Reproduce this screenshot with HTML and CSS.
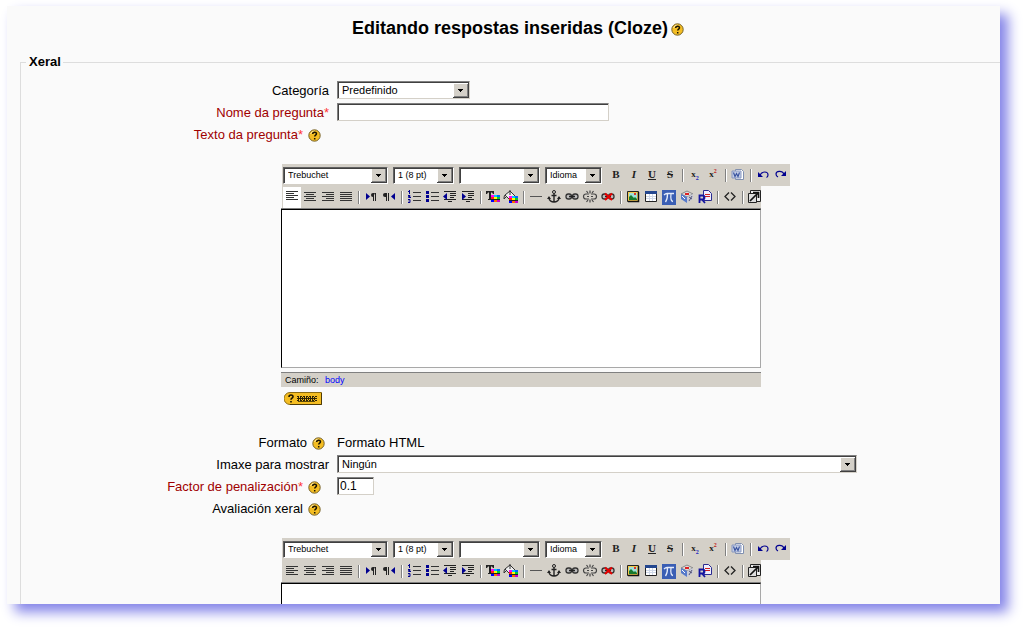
FILE: index.html
```html
<!DOCTYPE html>
<html lang="gl">
<head>
    <meta charset="UTF-8">
    <meta name="viewport" content="width=device-width, initial-scale=1.0">
    <title>Editando respostas inseridas (Cloze)</title>
    <link rel="stylesheet" href="styles.css">
</head>
<body>
    <svg class="symbols" aria-hidden="true">
        <symbol id="i-help" viewBox="0 0 13 13"><circle cx="6.5" cy="6.5" r="5.7" fill="#f4bd22" stroke="#75622c"/><path d="M2.5 5a4.5 4.5 0 0 1 4-3" fill="none" stroke="#ffe9a0"/><path d="M4.700 5c0-2.300 3.800-2.300 3.800-.2 0 1.400-1.800 1.200-1.800 2.800M6.700 9v1.500" fill="none" stroke="#1a1400" stroke-width="1.500"/></symbol>
        <symbol id="i-keys" viewBox="0 0 38 13"><path d="M6 .5h31.500v12H6a6 6 0 0 1 0-12z" fill="#f4bd22" stroke="#8a6a12"/><path d="M6 12.500h31.500V1" fill="none" stroke="#4d3a06"/><path d="M5 5c0-2.600 4-2.600 4-.3 0 1.500-2 1.400-2 3M7 9v1.600" fill="none" stroke="#1a1400" stroke-width="1.600"/><path d="M13 4.500h20M13 8.500h20" stroke="#2b2206" stroke-dasharray="2 1"/><path d="M13 6.500h20" stroke="#2b2206"/><path d="M14 5.500h18M14 7.500h18" stroke="#2b2206" stroke-dasharray="1 1"/><path d="M14 9.500h17" stroke="#5b4706"/></symbol>
        <symbol id="i-left" viewBox="0 0 18 18"><path d="M3 4.500h12M3 8.500h12M3 12.500h12" stroke="#333"/><path d="M3 6.500h8M3 10.500h8" stroke="#333"/></symbol>
        <symbol id="i-center" viewBox="0 0 18 18"><path d="M3 4.500h12M3 8.500h12M3 12.500h12M5 6.500h8M5 10.500h8" stroke="#333"/></symbol>
        <symbol id="i-right" viewBox="0 0 18 18"><path d="M3 4.500h12M3 8.500h12M3 12.500h12M7 6.500h8M7 10.500h8" stroke="#333"/></symbol>
        <symbol id="i-full" viewBox="0 0 18 18"><path d="M3 4.500h12M3 6.500h12M3 8.500h12M3 10.500h12M3 12.500h12" stroke="#333"/></symbol>
        <symbol id="i-ltr" viewBox="0 0 18 18"><path d="M4 5l4 3.500L4 12z" fill="#000090"/><path d="M13 5h-2a2 2 0 0 0 0 4z" fill="#222"/><path d="M11.500 5v8M13.500 5v8" stroke="#222"/></symbol>
        <symbol id="i-rtl" viewBox="0 0 18 18"><path d="M15 5l-4 3.500 4 3.500z" fill="#000090"/><path d="M7 5H5a2 2 0 0 0 0 4h2z" fill="#222"/><path d="M6.500 5v8M8.500 5v8" stroke="#222"/></symbol>
        <symbol id="i-ol" viewBox="0 0 18 18"><path d="M8 4.500h8M8 8.500h8M8 12.500h8" stroke="#333"/><path d="M4.500 2v4M3 3.500h1M3 7.500h2v1H3.500v1H6M3 11.500h2v3H3M3.500 13h1" fill="none" stroke="#000090"/></symbol>
        <symbol id="i-ul" viewBox="0 0 18 18"><path d="M8 4.500h8M8 8.500h8M8 12.500h8" stroke="#333"/><path d="M3 3h3v3H3zM3 7h3v3H3zM3 11h3v3H3z" fill="#000090"/></symbol>
        <symbol id="i-outdent" viewBox="0 0 18 18"><path d="M3 3.500h12M9 5.500h6M9 7.500h6M9 9.500h4M3 11.500h12M7 13.500h4" stroke="#222"/><path d="M6 5v7L2 8.500z" fill="#000090"/></symbol>
        <symbol id="i-indent" viewBox="0 0 18 18"><path d="M3 3.500h12M9 5.500h6M9 7.500h6M9 9.500h4M3 11.500h12M7 13.500h4" stroke="#222"/><path d="M3 5v7l4-3.500z" fill="#000090"/></symbol>
        <symbol id="i-swatch" viewBox="0 0 9 7"><path d="M0 0h9v7H0z" fill="#222"/><path d="M0 0h3v2H0z" fill="#f0f"/><path d="M3 0h3v2H3z" fill="#0cf"/><path d="M6 0h3v2H6z" fill="#06f"/><path d="M0 2h3v2H0z" fill="#f22"/><path d="M3 2h3v2H3z" fill="#ff0"/><path d="M6 2h3v2H6z" fill="#0c3"/><path d="M0 5h3v2H0z" fill="#00f"/><path d="M3 5h3v2H3z" fill="#f60"/><path d="M6 5h3v2H6z" fill="#c0c"/></symbol>
        <symbol id="i-color" viewBox="0 0 18 18"><path d="M2 3h8v3H9L8 4.500H7V11h1v1H4v-1h1V4.500H4L3 6H2z" fill="#222"/><use href="#i-swatch" x="7" y="7" width="9" height="7"/></symbol>
        <symbol id="i-fill" viewBox="0 0 18 18"><path d="M3 7l5-4 5 5-5 4z" fill="#eee" stroke="#333"/><path d="M3 7c-1 1-1 3-1 4l2-2M8 2v5" fill="none" stroke="#333"/><use href="#i-swatch" x="7" y="8" width="9" height="7"/></symbol>
        <symbol id="i-hr" viewBox="0 0 18 18"><path d="M3 8.500h12" stroke="#555"/></symbol>
        <symbol id="i-anchor" viewBox="0 0 18 18"><circle cx="9" cy="4" r="1.500" fill="none" stroke="#222"/><path d="M9 5.500V14M6.500 7.500h5M4 9.500c0 3 2.500 4.500 5 4.500s5-1.500 5-4.500" fill="none" stroke="#222" stroke-width="1.400"/><path d="M2 11l2-3 2 3zM12 11l2-3 2 3z" fill="#222"/></symbol>
        <symbol id="i-link" viewBox="0 0 18 18"><rect x="3" y="6" width="5.500" height="5" rx="2.300" fill="#bbb" stroke="#333" stroke-width="1.300"/><rect x="9.500" y="6" width="5.500" height="5" rx="2.300" fill="#bbb" stroke="#333" stroke-width="1.300"/><path d="M6 8.500h6" stroke="#222" stroke-width="1.500"/></symbol>
        <symbol id="i-unlink" viewBox="0 0 18 18"><path d="M8 6H5a2.500 2.500 0 0 0 0 5h3M10 6h3a2.500 2.500 0 0 1 0 5h-3M9 2.500v3M5.500 3l1.500 2M12.500 3L11 5M9 11.500v3M5.500 14l1.500-2M12.500 14L11 12M6 8.500h2M10 8.500h2" fill="none" stroke="#444" stroke-width="1.200"/></symbol>
        <symbol id="i-nolink" viewBox="0 0 18 18"><use href="#i-link"/><path d="M6 5.500l7 6.500M13 5.500L6 12" stroke="#e80000" stroke-width="2"/></symbol>
        <symbol id="i-image" viewBox="0 0 18 18"><path d="M3.500 3.500h11v10h-11z" fill="#f2c94c" stroke="#222"/><path d="M5 5h8v7H5z" fill="#9fe0d8"/><path d="M5 12V9l2-2 3 3 1-1 2 2v1z" fill="#177a2c"/><path d="M10 5h2v2h-2z" fill="#d33"/><path d="M14.500 4v9.500H4" fill="none" stroke="#111" stroke-width="1.500"/></symbol>
        <symbol id="i-table" viewBox="0 0 18 18"><path d="M3.500 3.500h11v10h-11z" fill="#fff" stroke="#222"/><path d="M3 3h12v3H3z" fill="#24478f"/><path d="M4 8.500h10M4 10.500h10M7.500 6v7M10.500 6v7" stroke="#cfd8e8"/></symbol>
        <symbol id="i-pi" viewBox="0 0 18 18"><path d="M2 2h14v15H2z" fill="#3a5eb4"/><path d="M4 7c1-1 2-1.500 3-1.500h7M7.500 6c0 4-.5 6-2 8M11 6c-.5 4-.5 7 2 7.500" fill="none" stroke="#e4ebfa" stroke-width="1.300"/></symbol>
        <symbol id="i-cube" viewBox="0 0 18 18"><path d="M3 6l6-3 6 3-6 3z" fill="#ddd" stroke="#888"/><path d="M3 6l6 3v6l-6-4z" fill="#567acb"/><path d="M15 6L9 9v6l6-4z" fill="#c9cbd8"/><path d="M7 5h4v2H7z" fill="#d22"/><path d="M11 9l3 2M14 8l-3 5" stroke="#557"/><path d="M4 8l3 3" stroke="#fff"/></symbol>
        <symbol id="i-replace" viewBox="0 0 18 18"><path d="M7.500 2.500h5l3 3v7h-8z" fill="#eef" stroke="#2a2a90"/><path d="M9 6.500h5M9 8.500h5" stroke="#d02020"/><path d="M3.500 15V7.500h3a2 2 0 0 1 0 4h-3M6 11.500L9 15" fill="none" stroke="#1414a0" stroke-width="1.800"/></symbol>
        <symbol id="i-code" viewBox="0 0 18 18"><path d="M8 4.500L4 8.500l4 4M10 4.500l4 4-4 4" fill="none" stroke="#222" stroke-width="1.300"/></symbol>
        <symbol id="i-popup" viewBox="0 0 18 18"><path d="M4.500 2.500h10v11h-10z" fill="#eee" stroke="#222"/><path d="M2.500 5.500h8v9h-8z" fill="#ddd" stroke="#222"/><path d="M4 13l8.500-8.500M7 4.500h5.500V10" fill="none" stroke="#111" stroke-width="1.700"/></symbol>
        <symbol id="i-word" viewBox="0 0 18 18"><path d="M6.500 3.500h6l2 2v8h-8z" fill="#fff" stroke="#8090b0"/><path d="M3 5h9v7H3z" fill="#c4cee6" stroke="#8898c0"/><path d="M4.500 6.500L6 10.500l1.500-3 1.500 3 1.500-4" fill="none" stroke="#3b55a0" stroke-width="1.200"/></symbol>
        <symbol id="i-undo" viewBox="0 0 18 18"><path d="M4 6v5h5z" fill="#000090"/><path d="M6 9c2-4 8-4 8 0 0 1-.5 2-1.500 2.500" fill="none" stroke="#000090" stroke-width="1.200"/></symbol>
        <symbol id="i-redo" viewBox="0 0 18 18"><path d="M14 5v5H9z" fill="#000090"/><path d="M12 8c-2-4-8-3-8 0 0 1.500 1 2.500 2 3" fill="none" stroke="#000090" stroke-width="1.200"/></symbol>
    </svg>

    <main class="page">
        <h1>Editando respostas inseridas (Cloze)<a class="help" href="#" aria-label="Axuda"><svg><use href="#i-help"/></svg></a></h1>

        <form>
            <fieldset>
                <legend>Xeral</legend>
                <div class="row">
                    <div class="title"><label for="category">Categoría</label></div>
                    <select id="category" class="category"><option>Predefinido</option></select>
                </div>
                <div class="row required">
                    <div class="title"><label for="name">Nome da pregunta<b>*</b></label></div>
                    <input type="text" id="name" class="name">
                </div>
                <div class="row required">
                    <div class="title"><label for="questiontext">Texto da pregunta<b>*</b></label><a class="help" href="#" aria-label="Axuda"><svg><use href="#i-help"/></svg></a></div>
                </div>
                <div class="editor" data-id="questiontext" data-active="true">
                    <div class="statusbar">Camiño: <a href="#">body</a></div>
                    <a class="keys" href="#" aria-label="Atallos de teclado"><svg><use href="#i-keys"/></svg></a>
                </div>
                <div class="row static">
                    <div class="title"><span>Formato</span><a class="help" href="#" aria-label="Axuda"><svg><use href="#i-help"/></svg></a></div>
                    <span>Formato HTML</span>
                </div>
                <div class="row">
                    <div class="title"><label for="image">Imaxe para mostrar</label></div>
                    <select id="image" class="image"><option>Ningún</option></select>
                </div>
                <div class="row required">
                    <div class="title"><label for="penalty">Factor de penalización<b>*</b></label><a class="help" href="#" aria-label="Axuda"><svg><use href="#i-help"/></svg></a></div>
                    <input type="text" id="penalty" class="penalty" value="0.1">
                </div>
                <div class="row">
                    <div class="title"><label for="feedback">Avaliación xeral</label><a class="help" href="#" aria-label="Axuda"><svg><use href="#i-help"/></svg></a></div>
                </div>
                <div class="editor" data-id="feedback"></div>
            </fieldset>
        </form>
    </main>

    <template id="editor-template">
        <div class="toolbar">
            <div class="tools selects">
                <select class="font" aria-label="Tipo de letra"><option>Trebuchet</option></select>
                <select class="size" aria-label="Tamaño"><option>1 (8 pt)</option></select>
                <select class="style" aria-label="Estilo"><option></option></select>
                <select class="lang" aria-label="Idioma"><option>Idioma</option></select>
                <div class="tools" data-tools="bold italic underline strike | sub sup | word | undo redo"></div>
            </div>
            <div class="tools" data-tools="left center right full | ltr rtl | ol ul outdent indent | color fill | hr anchor link unlink nolink | image table pi cube replace | code | popup"></div>
        </div>
        <textarea></textarea>
    </template>

    <script>
        // Buttons drawn with letters, the rest use the svg symbols
        const letters = {
            bold: '<b>B</b>',
            italic: '<i>I</i>',
            underline: '<u>U</u>',
            strike: '<s>S</s>',
            sub: 'x<sub>2</sub>',
            sup: 'x<sup>2</sup>'
        };

        function fillTools(box) {
            box.dataset.tools.split(' ').forEach(name => {
                if (name === '|') {
                    const sep = document.createElement('span');
                    sep.className = 'sep';
                    box.appendChild(sep);
                    return;
                }
                const button = document.createElement('button');
                button.type = 'button';
                button.className = 'tool tool-' + name;
                button.setAttribute('aria-label', name);
                button.innerHTML = letters[name] || '<svg><use href="#i-' + name + '"/></svg>';
                box.appendChild(button);
            });
        }

        document.querySelectorAll('.editor').forEach(editor => {
            const template = document.getElementById('editor-template');
            editor.prepend(template.content.cloneNode(true));
            editor.querySelectorAll('[data-tools]').forEach(fillTools);
            editor.querySelector('textarea').id = editor.dataset.id;
            if (editor.dataset.active) {
                editor.querySelector('.tool-left').classList.add('active');
            }
        });
    </script>
</body>
</html>
```
FILE: styles.css
```css
* {
    box-sizing: border-box;
}
body {
    margin: 0;
    height: 100vh;
    padding: 6px 23px 23px 7px;
    background-color: #fff;
    color: #000;
    font-family: "Liberation Sans", Arial, sans-serif;
    font-size: 13px;
    overflow: hidden;
}
.symbols {
    display: none;
}
svg {
    display: block;
}
.page {
    height: 100%;
    overflow: hidden;
    background-color: #fafafa;
    box-shadow: 8px 8px 12px #8484e8;
}
h1 {
    display: flex;
    justify-content: center;
    align-items: center;
    gap: 3px;
    margin: 12px 0 16px 29px;
    font-size: 18px;
    line-height: 20px;
}
.help svg {
    width: 13px;
    height: 13px;
}
h1 .help {
    padding-top: 3px;
}
fieldset {
    margin: 0 0 0 13px;
    padding: 9px 0 0;
    border: solid #ddd;
    border-width: 1px 0 0 1px;
}
legend {
    margin-left: 5px;
    padding: 0 2px 0 3px;
    font-weight: bold;
    line-height: 16px;
}
.row {
    display: flex;
    align-items: center;
    gap: 8px;
    height: 22px;
}
.title {
    display: flex;
    justify-content: flex-end;
    align-items: center;
    flex: 0 0 308px;
}
.title .help {
    margin: 2px 8px 0 5px;
}
.static .help {
    margin-right: 4px;
}
.required .title {
    color: #a00000;
}
.required b {
    color: #f33;
    font-weight: normal;
}
input,
select,
textarea {
    appearance: none;
    margin: 0;
    border: 1px solid;
    border-color: #808080 #d4d0c8 #d4d0c8 #808080;
    border-radius: 0;
    box-shadow: inset 1px 1px #404040;
    background-color: #fff;
    color: #000;
    font-family: inherit;
    outline: 0;
}
input {
    height: 18px;
    padding: 0 2px;
    font-size: 12px;
}
select {
    height: 18px;
    padding: 0 18px 0 4px;
    font-size: 11px;
    background-image: url("data:image/svg+xml,%3Csvg xmlns='http://www.w3.org/2000/svg' width='16' height='15'%3E%3Cpath d='M0 0h16v15H0z' fill='%23404040'/%3E%3Cpath d='M0 0h15v14H0z' fill='%23fff'/%3E%3Cpath d='M1 1h14v13H1z' fill='%23808080'/%3E%3Cpath d='M1 1h13v12H1z' fill='%23d4d0c8'/%3E%3Cpath d='M5 6h5v1H9v1H8v1H7V8H6V7H5z'/%3E%3C/svg%3E");
    background-repeat: no-repeat;
    background-position: right 0 top 1px;
}
.category {
    width: 133px;
}
.name {
    width: 272px;
}
.image {
    width: 520px;
}
.penalty {
    width: 37px;
}
.editor {
    width: 480px;
    margin: 19px 0 26px 260px;
}
.toolbar {
    padding-left: 1px;
}
.tools {
    display: flex;
    align-items: center;
    height: 22px;
    padding-left: 1px;
    background-color: #d4d0c8;
}
.selects {
    width: 508px;
    gap: 5px;
}
.selects .tools {
    padding: 0;
}
.toolbar select {
    height: 17px;
    padding-left: 4px;
    border-color: #606060 #fff #fff #606060;
    font-size: 9px;
    background-position: right 0 top 0;
}
.font {
    width: 105px;
}
.size {
    width: 61px;
}
.style {
    width: 81px;
}
.lang {
    width: 57px;
}
.tool {
    width: 18px;
    height: 18px;
    padding: 0 0 2px;
    border: 0;
    background: none;
    color: #222;
    font: bold 11px/16px "Liberation Serif", serif;
}
.tool svg {
    width: 18px;
    height: 18px;
}
.tool sub,
.tool sup {
    font-size: 6px;
    line-height: 1px;
    color: #2020c0;
}
.tool sup {
    color: #c02020;
}
.tool-sub,
.tool-sup {
    font-size: 9px;
}
.active {
    height: 21px;
    background-color: #fff;
}
.sep {
    width: 2px;
    height: 13px;
    margin: 0 2px 0 3px;
    border-left: 1px solid #808080;
    border-right: 1px solid #fff;
}
textarea {
    display: block;
    width: 100%;
    height: 159px;
    margin-top: 1px;
    border-color: #000 #a8a8a8 #a8a8a8 #000;
    box-shadow: 0 -1px #808080;
    resize: none;
}
.statusbar {
    height: 15px;
    margin-top: 4px;
    padding-left: 4px;
    border-top: 1px solid #808080;
    background-color: #d4d0c8;
    font-size: 9px;
    line-height: 15px;
}
.statusbar a {
    margin-left: 4px;
    color: #00f;
    text-decoration: none;
}
.keys {
    display: block;
    width: 38px;
    margin: 5px 0 0 3px;
}
.keys svg {
    width: 38px;
    height: 13px;
}
```
